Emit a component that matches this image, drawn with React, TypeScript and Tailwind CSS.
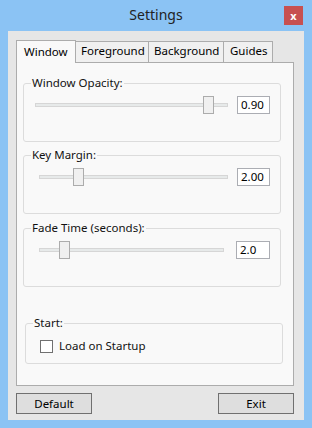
import React from "react";

function Slider({ trackW, thumbLeft }: { trackW: number; thumbLeft: number }) {
  return (
    <div className="relative h-[18px] flex items-center" style={{ width: trackW }}>
      <div className="w-full h-[4px] bg-[#e7eaea] border border-[#d6d6d6]" />
      <div
        className="absolute top-0 w-[11px] h-[18px] bg-[#f0f0f0] border border-[#acacac]"
        style={{ left: thumbLeft }}
      />
    </div>
  );
}

function Group({
  label,
  children,
  h,
  className,
}: {
  label: string;
  children: React.ReactNode;
  h: string;
  className?: string;
}) {
  return (
    <div className={`relative border border-[#dcdcdc] rounded-[3px] ${h} ${className ?? ""}`}>
      <span className="absolute -top-[9px] left-[7px] px-[1px] bg-[#f9f9f9] leading-[16px] text-[11.5px] text-[#111]">
        {label}
      </span>
      {children}
    </div>
  );
}

function Box({ value, w }: { value: string; w: string }) {
  return (
    <div className={`h-[18px] ${w} bg-white border border-[#abadb3] pl-[3px] text-[11.5px] leading-[16px] text-[#000]`}>
      {value}
    </div>
  );
}

export default function App() {
  return (
    <div className="w-[312px] h-[428px] bg-[#8bc3f4] flex flex-col font-['Noto_Sans',sans-serif] text-[#000]">
      <div className="h-[31px] flex items-start relative">
        <div className="flex-1 text-center text-[14px] leading-[20px] pt-[5px] text-[#222]">Settings</div>
        <div className="absolute right-[9px] top-[6px] w-[19px] h-[19px] bg-[#c75050] flex items-center justify-center text-white text-[11px] font-bold leading-none">
          x
        </div>
      </div>
      <div className="mx-[8px] mb-[8px] flex-1 bg-[#e6e6e6] pl-[8px] pr-[10px] pt-[8px] flex flex-col">
        <div className="flex items-end h-[23px] text-[11.5px] leading-[16px]">
          <div className="relative z-10 h-[23px] w-[60px] bg-[#f9f9f9] border border-b-0 border-[#acacac] pl-[7px] pt-[3px] -mb-px">
            Window
          </div>
          <div className="h-[21px] w-[74px] -ml-px bg-[#f0f0f0] border border-b-0 border-[#acacac] pl-[5px] pt-[1px]">
            Foreground
          </div>
          <div className="h-[21px] w-[76px] -ml-px bg-[#f0f0f0] border border-b-0 border-[#acacac] pl-[5px] pt-[1px]">
            Background
          </div>
          <div className="h-[21px] w-[50px] -ml-px bg-[#f0f0f0] border border-b-0 border-[#acacac] pl-[6px] pt-[1px]">
            Guides
          </div>
        </div>
        <div className="h-[324px] bg-[#f9f9f9] border border-[#acacac] pl-[6px] pr-[12px] pt-[20px] flex flex-col">
          <Group label="Window Opacity:" h="h-[59px]">
            <div className="flex items-center pt-[12px] pl-[11px]">
              <Slider trackW={193} thumbLeft={168} />
              <div className="ml-[9px]">
                <Box value="0.90" w="w-[33px]" />
              </div>
            </div>
          </Group>
          <Group label="Key Margin:" h="h-[59px]" className="mt-[13px]">
            <div className="flex items-center pt-[12px] pl-[15px]">
              <Slider trackW={189} thumbLeft={34} />
              <div className="ml-[9px]">
                <Box value="2.00" w="w-[33px]" />
              </div>
            </div>
          </Group>
          <Group label="Fade Time (seconds):" h="h-[59px]" className="mt-[14px]">
            <div className="flex items-center pt-[12px] pl-[15px]">
              <Slider trackW={185} thumbLeft={20} />
              <div className="ml-[12px]">
                <Box value="2.0" w="w-[34px]" />
              </div>
            </div>
          </Group>
          <Group label="Start:" h="h-[41px]" className="mt-[36px] ml-[2px] -mr-[2px]">
            <div className="flex items-center pt-[14px] pl-[14px] text-[11.5px] leading-[16px] text-[#111]">
              <div className="w-[13px] h-[13px] bg-white border border-[#707070]" />
              <span className="ml-[6px]">Load on Startup</span>
            </div>
          </Group>
        </div>
        <div className="flex justify-between mt-[7px] text-[11.5px] leading-[16px]">
          <div className="w-[76px] h-[21px] bg-[#dedede] border border-[#707070] flex items-center justify-center">
            Default
          </div>
          <div className="w-[76px] h-[21px] bg-[#dedede] border border-[#707070] flex items-center justify-center">
            Exit
          </div>
        </div>
      </div>
    </div>
  );
}
